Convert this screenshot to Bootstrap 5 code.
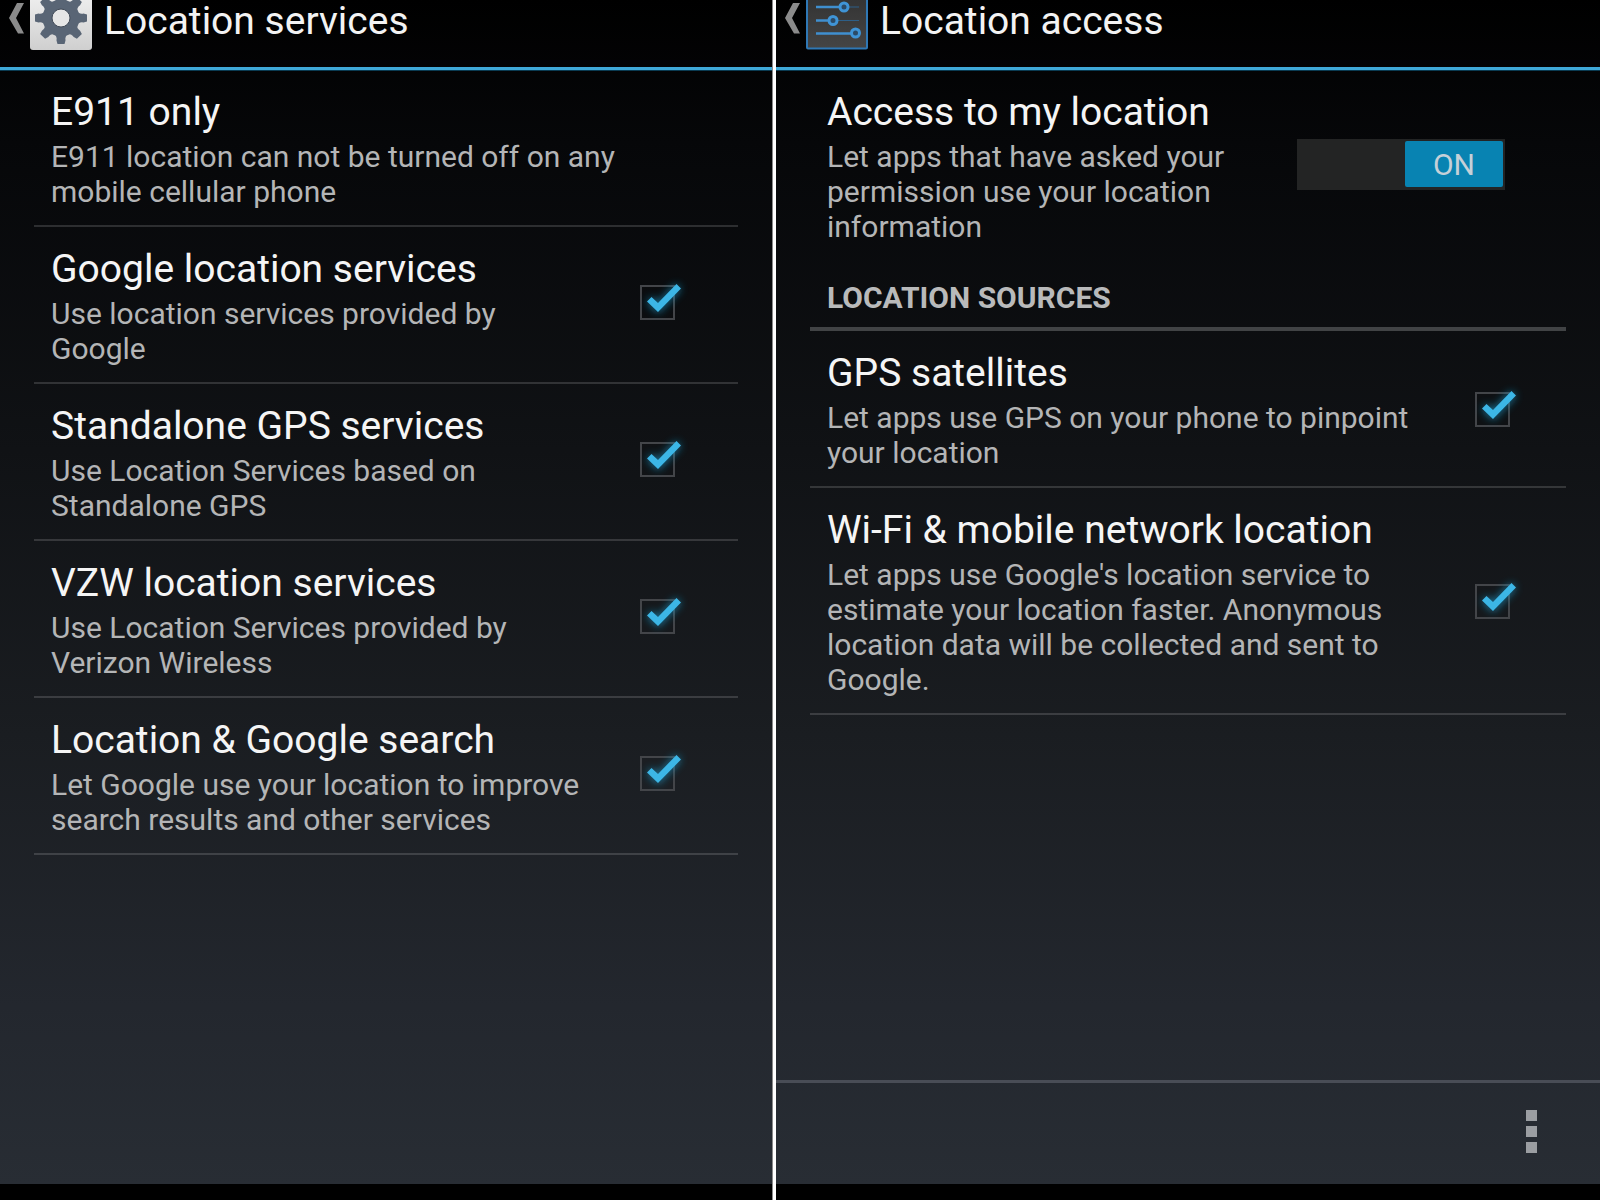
<!DOCTYPE html>
<html lang="en">
<head>
<meta charset="utf-8">
<meta name="viewport" content="width=device-width, initial-scale=1">
<title>Location settings</title>
<link href="https://cdn.jsdelivr.net/npm/bootstrap@5.3.0/dist/css/bootstrap.min.css" rel="stylesheet">
<style>
  body { background: #000; color: #f3f3f3; font-family: Roboto, "Noto Sans", sans-serif; }
  .pane-left { flex: 0 0 48.25%; min-width: 0; }
  .pane-right { min-width: 0; }
  .pane-split { flex: 0 0 4px; background: #fff; border-left: 1px solid #8a8a8a; }
  .screen { background: linear-gradient(#000 0%, #060709 12%, #101215 38%, #1a1d21 62%, #23272e 85%, #282d34 100%); }
  .nav-strip { height: 16px; background: #000; }
  .topbar { height: 70px; padding: 0 0 0 8px; border-bottom: 3px solid #3fa9d8; box-shadow: 0 1px 0 #0a3b52; }
  .topbar .up { height: 50px; color: inherit; text-decoration: none; }
  .topbar h1 { font-size: 39px; line-height: 42px; font-weight: 400; margin: 0 0 0 12px; }
  .prefs { padding: 0 34px; }
  .pref { padding: 18px 17px 16px; border-bottom: 2px solid rgba(255, 255, 255, .15); }
  .pref-title { font-size: 39px; line-height: 48px; font-weight: 400; margin: 0; color: #f5f5f5; }
  .pref-sum { font-size: 30px; line-height: 35px; margin: 3px 0 0; color: #b4b5b6; }
  .section-head { font-size: 30px; line-height: 36px; font-weight: 700; color: #b9babb; margin: 0; padding: 36px 17px 11px; border-bottom: 4px solid #414345; }
  .tick { width: 35px; height: 35px; margin: 0 46px 6px 0; }
  .tick input { appearance: none; width: 35px; height: 35px; margin: 0; border: 2px solid #434549; background: transparent; display: block; }
  .tick svg { left: -6px; top: -10px; pointer-events: none; }
  .pane-right .tick { margin: 0 39px 0 0; }
  .switch { width: 208px; height: 51px; background: #232424; padding: 2px; border: 0; margin: 0 44px 3px 0; }
  .switch span { width: 98px; height: 46px; border-radius: 2px; background: #0883b2; color: #c5d0d8; font-size: 30px; line-height: 48px; }
  .actionbar { height: 104px; border-top: 3px solid #494d56; padding: 0 62px 4px 0; }
</style>
</head>
<body>
<svg width="0" height="0" class="position-absolute" aria-hidden="true">
  <defs><filter id="glow" x="-50%" y="-50%" width="200%" height="200%"><feGaussianBlur stdDeviation="4"/></filter></defs>
  <symbol id="check" viewBox="0 0 56 56">
    <path d="M13 27l5-5 6 6L42 9l5 5-23 24z" fill="#1a9fd0" opacity=".75" filter="url(#glow)"/>
    <path d="M13 26.500l4.500-4.500 6.500 6L42.500 9l4.500 4.500L24 37z" fill="#3cb6e6"/>
  </symbol>
</svg>
<main class="d-flex min-vh-100">
  <section class="pane-left d-flex flex-column">
    <div class="screen flex-grow-1">
      <header class="topbar">
        <a href="#" class="up d-flex align-items-start">
          <svg width="84" height="50" viewBox="8 0 84 50" aria-hidden="true">
            <defs>
              <linearGradient id="tile" x2="0" y2="1"><stop stop-color="#f2f2f2"/><stop offset="1" stop-color="#cfcfcf"/></linearGradient>
            </defs>
            <path d="M17 3h7L16 18l8 15.500h-6L9 18z" fill="#8b8b8b"/>
            <path d="M30-10h62v57q0 3-3 3H33q-3 0-3-3z" fill="url(#tile)"/>
            <g fill="#596575" transform="translate(61 18)">
              <circle r="18.500"/>
              <g id="teeth"><path id="tooth" d="M-8-15Q-3.500-18-4.500-22.500L-3.500-26H3.500L4.500-22.500Q3.500-18 8-15z"/><use href="#tooth" transform="rotate(45)"/><use href="#tooth" transform="rotate(90)"/><use href="#tooth" transform="rotate(135)"/></g>
              <use href="#teeth" transform="rotate(180)"/>
              <circle r="9" fill="#e6e6e6" stroke="#434c59"/>
            </g>
          </svg>
          <h1>Location services</h1>
        </a>
      </header>
      <div class="prefs">
        <div class="pref"><h2 class="pref-title">E911 only</h2><p class="pref-sum">E911 location can not be turned off on any<br>mobile cellular phone</p></div>
        <div class="pref d-flex align-items-center justify-content-between">
          <label for="c1"><span class="pref-title d-block">Google location services</span><span class="pref-sum d-block">Use location services provided by<br>Google</span></label>
          <div class="tick position-relative flex-shrink-0"><input type="checkbox" id="c1" checked><svg class="position-absolute" width="56" height="56"><use href="#check"/></svg></div>
        </div>
        <div class="pref d-flex align-items-center justify-content-between">
          <label for="c2"><span class="pref-title d-block">Standalone GPS services</span><span class="pref-sum d-block">Use Location Services based on<br>Standalone GPS</span></label>
          <div class="tick position-relative flex-shrink-0"><input type="checkbox" id="c2" checked><svg class="position-absolute" width="56" height="56"><use href="#check"/></svg></div>
        </div>
        <div class="pref d-flex align-items-center justify-content-between">
          <label for="c3"><span class="pref-title d-block">VZW location services</span><span class="pref-sum d-block">Use Location Services provided by<br>Verizon Wireless</span></label>
          <div class="tick position-relative flex-shrink-0"><input type="checkbox" id="c3" checked><svg class="position-absolute" width="56" height="56"><use href="#check"/></svg></div>
        </div>
        <div class="pref d-flex align-items-center justify-content-between">
          <label for="c4"><span class="pref-title d-block">Location &amp; Google search</span><span class="pref-sum d-block">Let Google use your location to improve<br>search results and other services</span></label>
          <div class="tick position-relative flex-shrink-0"><input type="checkbox" id="c4" checked><svg class="position-absolute" width="56" height="56"><use href="#check"/></svg></div>
        </div>
      </div>
    </div>
    <div class="nav-strip"></div>
  </section>
  <div class="pane-split"></div>
  <section class="pane-right flex-grow-1 d-flex flex-column">
    <div class="screen flex-grow-1 d-flex flex-column">
      <header class="topbar">
        <a href="#" class="up d-flex align-items-start">
          <svg width="84" height="50" viewBox="8 0 84 50" aria-hidden="true">
            <defs><linearGradient id="dark" x2="0" y2="1"><stop stop-color="#303030"/><stop offset="1" stop-color="#454545"/></linearGradient></defs>
            <path d="M17 3h7L16 18l8 15.500h-6L9 18z" fill="#8b8b8b"/>
            <rect x="31" y="-12" width="60" height="60.500" rx="1" fill="url(#dark)" stroke="#2f78b5" stroke-width="2"/>
            <path d="M40 7h25M40 20.500h14M40 33.500h36" stroke="#3f8fcf" stroke-width="2.500"/>
            <path d="M71 7h12M60 20.500h23" stroke="#2d5f88"/>
            <g fill="#2b4a66" stroke="#3f94d6" stroke-width="3"><circle cx="68" cy="7" r="4"/><circle cx="57" cy="20.500" r="4"/><circle cx="79.500" cy="33" r="4"/></g>
          </svg>
          <h1>Location access</h1>
        </a>
      </header>
      <div class="prefs flex-grow-1">
        <div class="pref border-0 pb-0 d-flex align-items-center justify-content-between">
          <label for="sw"><span class="pref-title d-block">Access to my location</span><span class="pref-sum d-block">Let apps that have asked your<br>permission use your location<br>information</span></label>
          <button type="button" id="sw" role="switch" aria-checked="true" class="switch d-flex justify-content-end flex-shrink-0"><span>ON</span></button>
        </div>
        <h2 class="section-head">LOCATION SOURCES</h2>
        <div class="pref d-flex align-items-center justify-content-between">
          <label for="c5"><span class="pref-title d-block">GPS satellites</span><span class="pref-sum d-block">Let apps use GPS on your phone to pinpoint<br>your location</span></label>
          <div class="tick position-relative flex-shrink-0"><input type="checkbox" id="c5" checked><svg class="position-absolute" width="56" height="56"><use href="#check"/></svg></div>
        </div>
        <div class="pref d-flex align-items-center justify-content-between">
          <label for="c6"><span class="pref-title d-block">Wi-Fi &amp; mobile network location</span><span class="pref-sum d-block">Let apps use Google's location service to<br>estimate your location faster. Anonymous<br>location data will be collected and sent to<br>Google.</span></label>
          <div class="tick position-relative flex-shrink-0"><input type="checkbox" id="c6" checked><svg class="position-absolute" width="56" height="56"><use href="#check"/></svg></div>
        </div>
      </div>
      <footer class="actionbar d-flex align-items-center justify-content-end">
        <button type="button" class="btn p-0 border-0 lh-1" aria-label="More options"><svg width="12" height="44" fill="#9b9ea2"><path d="M0 0h11v11H0zM0 16h11v11H0zM0 32h11v11H0z"/></svg></button>
      </footer>
    </div>
    <div class="nav-strip"></div>
  </section>
</main>
<script src="https://cdn.jsdelivr.net/npm/bootstrap@5.3.0/dist/js/bootstrap.bundle.min.js"></script>
</body>
</html>
